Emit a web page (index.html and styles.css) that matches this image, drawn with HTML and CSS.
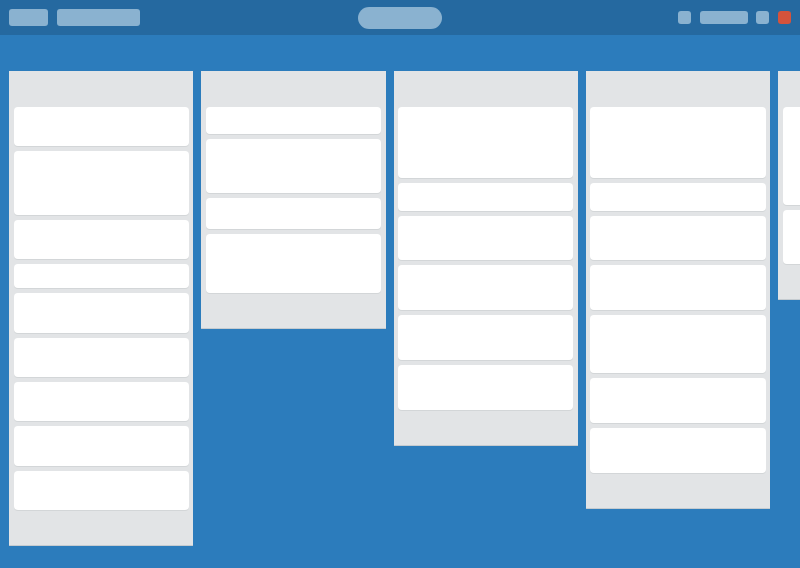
FILE: index.html
```html
<!DOCTYPE html>
<html lang="en">
<head>
<meta charset="utf-8">
<title>Board</title>
<link rel="stylesheet" href="styles.css">
</head>
<body>
<header class="topbar">
  <div class="left">
    <span class="pill btn-s"></span>
    <span class="pill btn-l"></span>
  </div>
  <div class="center">
    <span class="search"></span>
  </div>
  <div class="right">
    <span class="pill sq"></span>
    <span class="pill btn-m"></span>
    <span class="pill sq"></span>
    <span class="pill sq red"></span>
  </div>
</header>
<main class="board">
  <section class="list">
    <div class="card h39"></div>
    <div class="card h64"></div>
    <div class="card h39"></div>
    <div class="card h24"></div>
    <div class="card h40"></div>
    <div class="card h39"></div>
    <div class="card h39"></div>
    <div class="card h40"></div>
    <div class="card h39"></div>
  </section>
  <section class="list">
    <div class="card h27"></div>
    <div class="card h54"></div>
    <div class="card h31"></div>
    <div class="card h59"></div>
  </section>
  <section class="list">
    <div class="card h71"></div>
    <div class="card h28"></div>
    <div class="card h44"></div>
    <div class="card h45"></div>
    <div class="card h45"></div>
    <div class="card h45"></div>
  </section>
  <section class="list">
    <div class="card h71"></div>
    <div class="card h28"></div>
    <div class="card h44"></div>
    <div class="card h45"></div>
    <div class="card h58"></div>
    <div class="card h45"></div>
    <div class="card h45"></div>
  </section>
  <section class="list">
    <div class="card h98"></div>
    <div class="card h54"></div>
  </section>
</main>
</body>
</html>
```
FILE: styles.css
```css
* { box-sizing: border-box; }
html, body {
  margin: 0;
  padding: 0;
  width: 800px;
  height: 568px;
  overflow: hidden;
  background: #2c7cbc;
  font-family: "Liberation Sans", Arial, sans-serif;
}
.topbar {
  height: 35px;
  background: #2569a0;
  display: grid;
  grid-template-columns: 1fr auto 1fr;
  align-items: center;
  padding: 0 9px;
}
.left, .right {
  display: flex;
  align-items: center;
  gap: 9px;
}
.right { justify-content: flex-end; gap: 8.67px; }
.center { display: flex; justify-content: center; }
.pill {
  display: block;
  background: #8ab2d0;
  border-radius: 3px;
}
.btn-s { width: 39px; height: 17px; }
.btn-l { width: 83px; height: 17px; }
.btn-m { width: 48px; height: 13px; }
.sq { width: 13px; height: 13px; }
.red { background: #d4533c; }
.search {
  display: block;
  width: 84px;
  height: 22px;
  border-radius: 11px;
  background: #8ab2d0;
}
.board {
  display: flex;
  align-items: flex-start;
  gap: 8px;
  padding: 36px 0 0 9px;
  overflow: hidden;
}
.list {
  flex: 0 0 184.3px;
  background: #e2e4e6;
  border-bottom: 1px solid #c5cbd0;
  padding: 36px 4.5px 30px;
}
.card {
  background: #fff;
  border-radius: 4px;
  box-shadow: 0 1px 0 #d3d6d8;
  margin-bottom: 5px;
}
.h24 { height: 24px; }
.h27 { height: 27px; }
.h28 { height: 28px; }
.h31 { height: 31px; }
.h39 { height: 39px; }
.h40 { height: 40px; }
.h44 { height: 44px; }
.h45 { height: 45px; }
.h54 { height: 54px; }
.h58 { height: 58px; }
.h59 { height: 59px; }
.h64 { height: 64px; }
.h71 { height: 71px; }
.h98 { height: 98px; }
```
